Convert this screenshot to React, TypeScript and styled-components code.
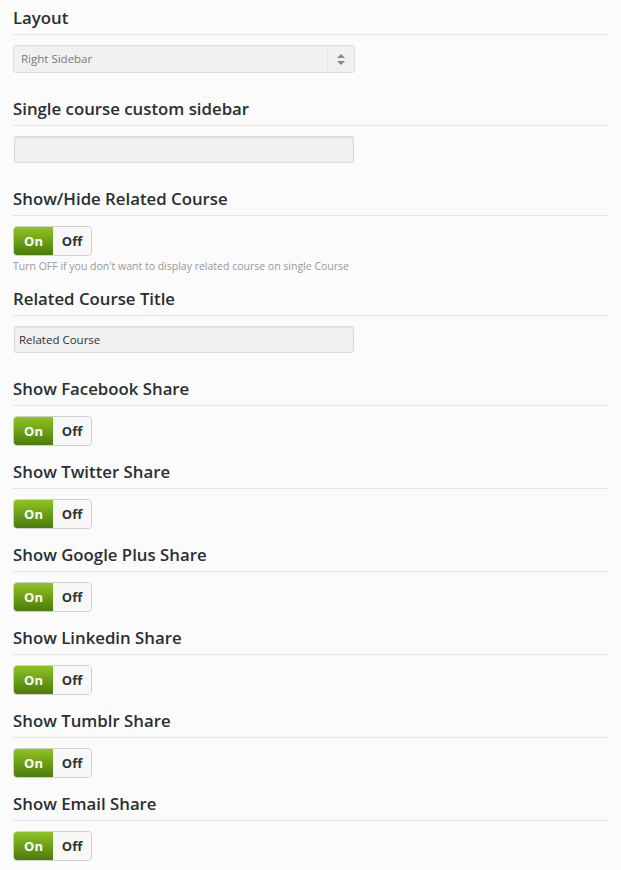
import React from "react";
import styled, { createGlobalStyle } from "styled-components";

const Global = createGlobalStyle`
  html, body {
    margin: 0;
    padding: 0;
    background: #fbfbfb;
  }
  body {
    font-family: "Open Sans", "Liberation Sans", sans-serif;
    color: #222;
  }
`;

const Page = styled.div`
  width: 595px;
  padding: 7px 0 0 13px;
  display: flex;
  flex-direction: column;
  gap: 15px;
`;

const Section = styled.section`
  display: flex;
  flex-direction: column;
`;

const Heading = styled.h3`
  margin: 0 0 10px;
  padding: 0 0 5px;
  font-size: 16.8px;
  line-height: 22px;
  font-weight: 600;
  color: #2a2f34;
  border-bottom: 1px solid #e5e5e5;
`;

const SelectBox = styled.div`
  width: 340px;
  height: 26px;
  border: 1px solid #dcdcdc;
  border-radius: 3px;
  background: #f1f1f1;
  display: flex;
  align-items: stretch;
  margin-bottom: 10px;
`;

const SelectText = styled.span`
  flex: 1;
  padding-left: 7px;
  font-size: 11.5px;
  line-height: 26px;
  color: #7a7a7a;
`;

const SelectArrow = styled.span`
  width: 26px;
  border-left: 1px solid #e6e6e6;
  display: flex;
  align-items: center;
  justify-content: center;
`;

const TextInput = styled.div`
  height: 25px;
  width: 334px;
  margin: 0 0 10px 1px;
  padding-left: 4px;
  border: 1px solid #dcdcdc;
  border-radius: 2px;
  background: #f1f1f1;
  box-shadow: inset 0 1px 2px rgba(0, 0, 0, 0.07);
  font-size: 11.5px;
  line-height: 25px;
  color: #333;
`;

const Toggle = styled.div`
  width: 77px;
  height: 28px;
  border: 1px solid #cfcfcf;
  border-radius: 4px;
  overflow: hidden;
  display: flex;
  font-size: 13px;
  font-weight: 700;
`;

const ToggleOn = styled.span`
  width: 39px;
  background: linear-gradient(to bottom, #8ec422, #4b7b0b);
  color: #fff;
  display: flex;
  align-items: center;
  justify-content: center;
`;

const ToggleOff = styled.span`
  flex: 1;
  background: #f8f8f8;
  color: #333;
  display: flex;
  align-items: center;
  justify-content: center;
`;

const Help = styled.p`
  margin: 3px 0 0;
  font-size: 10.5px;
  line-height: 14px;
  color: #999;
`;

const Arrows = () => (
  <svg width="8" height="11" viewBox="0 0 8 11">
    <path d="M4 0 L8 4 L0 4 Z" fill="#888" />
    <path d="M0 7 L8 7 L4 11 Z" fill="#888" />
  </svg>
);

const Switch = () => (
  <Toggle>
    <ToggleOn>On</ToggleOn>
    <ToggleOff>Off</ToggleOff>
  </Toggle>
);

const shares = [
  "Show Facebook Share",
  "Show Twitter Share",
  "Show Google Plus Share",
  "Show Linkedin Share",
  "Show Tumblr Share",
  "Show Email Share",
];

export default function App() {
  return (
    <>
      <Global />
      <Page>
        <Section>
          <Heading>Layout</Heading>
          <SelectBox>
            <SelectText>Right Sidebar</SelectText>
            <SelectArrow>
              <Arrows />
            </SelectArrow>
          </SelectBox>
        </Section>
        <Section>
          <Heading>Single course custom sidebar</Heading>
          <TextInput />
        </Section>
        <Section>
          <Heading>Show/Hide Related Course</Heading>
          <Switch />
          <Help>Turn OFF if you don't want to display related course on single Course</Help>
        </Section>
        <Section>
          <Heading>Related Course Title</Heading>
          <TextInput>Related Course</TextInput>
        </Section>
        {shares.map((s) => (
          <Section key={s}>
            <Heading>{s}</Heading>
            <Switch />
          </Section>
        ))}
      </Page>
    </>
  );
}
